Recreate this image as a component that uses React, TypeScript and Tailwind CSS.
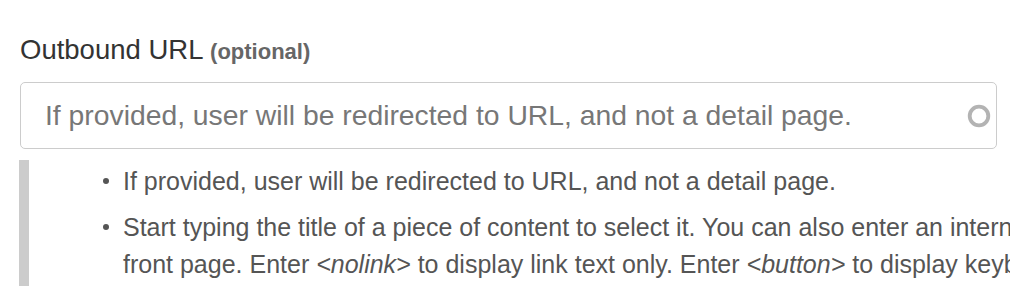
const font = { fontFamily: '"Liberation Sans", Arial, sans-serif' };

const Throbber = () => (
  <svg width="26" height="26" viewBox="0 0 26 26" className="blur-[0.7px]">
    <circle cx="13" cy="13" r="9.3" fill="none" stroke="#b3b3b3" strokeWidth="3.8" />
  </svg>
);

const Bullet = ({ children }: { children: React.ReactNode }) => (
  <li className="flex">
    <span className="mt-[15px] mr-[14px] h-[6px] w-[6px] shrink-0 rounded-full bg-[#555]" />
    <div>{children}</div>
  </li>
);

const App = () => {
  return (
    <div className="h-[308px] w-[1010px] overflow-hidden bg-white" style={font}>
      <div className="pl-[20px] pt-[34px]">
        <label className="block text-[27.5px] leading-[32px] text-[#333]">
          Outbound URL <span className="text-[22px] font-bold text-[#666]">(optional)</span>
        </label>

        <div className="mt-[14px] flex h-[67px] w-[977px] items-center rounded-[5px] border border-[#ccc] bg-white pl-[24px] pr-[4px]">
          <input
            className="min-w-0 flex-1 bg-transparent text-[28.3px] text-[#333] outline-none placeholder:text-[#777]"
            placeholder="If provided, user will be redirected to URL, and not a detail page."
          />
          <Throbber />
        </div>

        <div className="-ml-px mt-[11px] w-[1400px] border-l-[10px] border-[#ccc] pt-[3px] pb-[3px]">
          <ul className="flex flex-col gap-[9px] pl-[74px] text-[25px] leading-[37px] whitespace-nowrap text-[#555]">
            <Bullet>If provided, user will be redirected to URL, and not a detail page.</Bullet>
            <Bullet>
              Start typing the title of a piece of content to select it. You can also enter an internal path such as
              /node/add or an external URL such as http://example.com. Enter <em>&lt;front&gt;</em> to link to the
              <br />
              front page. Enter <em>&lt;nolink&gt;</em> to display link text only. Enter <em>&lt;button&gt;</em> to
              display keyboard-accessible link text only.
            </Bullet>
          </ul>
        </div>
      </div>
    </div>
  );
};

export default App;
